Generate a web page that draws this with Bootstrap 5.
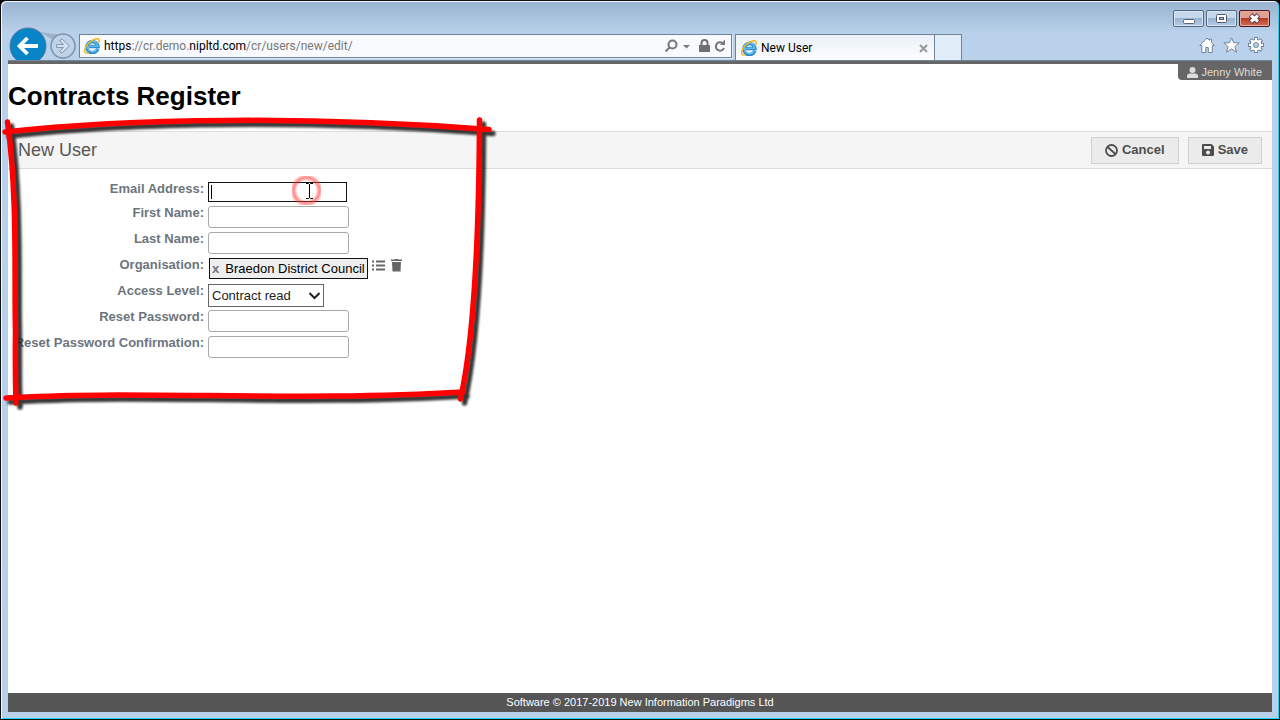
<!DOCTYPE html>
<html lang="en">
<head>
<meta charset="utf-8">
<meta name="viewport" content="width=device-width, initial-scale=1">
<title>New User</title>
<link href="https://cdn.jsdelivr.net/npm/bootstrap@5.3.0/dist/css/bootstrap.min.css" rel="stylesheet">
<style>
body { font-family: "Liberation Sans", Arial, sans-serif; font-size: 13px; line-height: 16px; background: #000; color: #000; }
button, select, input { font: inherit; }
svg { display: block; }
.win { background: linear-gradient(#99b3d1 0, #b9d1ea 32px, #b9d0ea 100%); border: 1px solid #111; border-radius: 6px 6px 0 0; box-shadow: inset 1px 1px #f2f8fd, inset -1px -1px #1cd8f0; padding: 0 7px 7px; }
.titlebar { height: 33px; padding-top: 9px; gap: 2px; padding-right: 2px; }
.winbtn { width: 31px; height: 17px; padding: 0; border: 1px solid #536780; border-radius: 2px; background: linear-gradient(#c5d8ec 0 45%, #98b3d1 50%, #b4cce6); box-shadow: inset 0 0 0 1px #d8e6f4; }
.winbtn.shut { border-color: #4d1420; background: linear-gradient(#e0a094 0 45%, #b93b22 50%, #cf705a); box-shadow: inset 0 0 0 1px #e5aba0; }
.navrow { height: 27px; font-family: Roboto, "Open Sans", sans-serif; font-size: 12px; }
.plain { border: 0; background: none; padding: 0; }
.arrows { width: 71px; }
.arrows svg { margin-top: -9px; }
.address { height: 24px; border: 1px solid #6f8296; background: #f8fafe; flex: 0 0 653px; padding: 0 5px 0 4px; box-shadow: 1px 1px #dfeaf6; }
.url { color: #777; white-space: nowrap; }
.url b { font-weight: 400; color: #000; }
.tabitem { width: 200px; height: 27px; margin-left: 3px; border: 1px solid #6f8296; border-bottom: 0; background: linear-gradient(#eaf0f8, #fdfeff); padding: 0 6px 0 5px; }
.newtab { width: 27px; height: 27px; border: 1px solid #6f8296; border-width: 1px 1px 0 0; background: #e1edf9; }
.tools { gap: 8px; padding-right: 8px; height: 22px; }
.page { background: #fff; border-top: 3px solid #666; min-height: 0; box-shadow: 0 -1px #71879c; }
.account { background: #666; color: #ddd; font-size: 11px; line-height: 16px; padding: 0 10px 0 9px; border-radius: 0 0 0 4px; text-decoration: none; gap: 3px; }
h1 { font-size: 26px; line-height: 32px; font-weight: 700; margin: 0 0 19px; }
.pagebar { height: 38px; background: #f5f5f5; border: solid #ddd; border-width: 1px 0; padding: 0 10px; gap: 9px; }
h2 { font-size: 18px; line-height: 24px; color: #555; margin: 0; }
.act { height: 27px; border: 1px solid #d0d0d0; border-radius: 0; background: #ebebeb; color: #4d4d4d; font-size: 13px; font-weight: 700; line-height: 16px; padding: 0 13px; gap: 4px; }
.fields { display: grid; grid-template-columns: 196px 1fr; column-gap: 4px; grid-template-rows: 24px; grid-auto-rows: 26px; padding-top: 13px; }
.fields label { font-weight: 700; color: #6c757d; text-align: right; white-space: nowrap; margin-top: -1px; }
.txt { width: 141px; height: 22px; border: 1px solid #a9a9a9; border-radius: 3px; padding: 0 3px; display: block; }
.txt.live { width: 139px; height: 20px; border-color: #111; border-radius: 0; outline: 0; }
.lvl { width: 116px; height: 23px; border: 1px solid #666; border-radius: 0; padding: 0 0 0 3px; appearance: none; background: #fff; color: #222; display: block; }
.chip { height: 21px; border: 1px solid #111; background: #eee; padding: 0 2px; gap: 6px; margin-left: 1px; white-space: nowrap; }
.iconset { gap: 6px; }
.pagefoot { background: #555; color: #fff; font-size: 11px; line-height: 19px; }
.over { position: absolute; pointer-events: none; }
</style>
</head>
<body>
<div class="win vh-100 d-flex flex-column position-relative overflow-hidden">
  <header>
    <div class="titlebar d-flex justify-content-end">
      <button class="winbtn" aria-label="Minimize"><svg width="29" height="15"><rect x="9.500" y="8.500" width="11" height="4" rx="1" fill="#fff" stroke="#5d6673"/></svg></button>
      <button class="winbtn" aria-label="Maximize"><svg width="29" height="15"><rect x="9.500" y="3.500" width="10" height="8" rx="1" fill="#fff" stroke="#505b69"/><rect x="12.500" y="6.500" width="4" height="2" fill="#a9c0da" stroke="#505b69"/></svg></button>
      <button class="winbtn shut" aria-label="Close"><svg width="29" height="15"><path d="M10.500 4l8 7M18.500 4l-8 7" stroke="#5a3941" stroke-width="5"/><path d="M11 4.500l7 6M18 4.500l-7 6" stroke="#fff" stroke-width="3"/></svg></button>
    </div>
    <div class="navrow d-flex">
      <div class="arrows flex-shrink-0">
        <svg width="71" height="36" role="img" aria-label="Back and forward">
          <path d="M22 3Q36 10 58 9L50 18Q38 10 22 3z" fill="#9eb2c9"/>
          <circle cx="20" cy="21" r="18" fill="#0785c6" stroke="#557899"/>
          <path d="M30 21H12M19.500 13l-8 8 8 8" fill="none" stroke="#fff" stroke-width="3.800"/>
          <circle cx="55" cy="21" r="12" fill="#bfd2e9" stroke="#7e92aa" stroke-width="1.500"/>
          <path d="M48.500 19.500h7l-4-4 2.500-1.500 7.500 7-7.500 7-2.500-1.500 4-4h-7z" fill="#d2e0f0" stroke="#8398b1"/>
        </svg>
      </div>
      <div class="address d-flex align-items-center">
        <svg width="16" height="16" viewBox="0 0 16 16" class="me-1 flex-shrink-0"><g id="ie"><path d="M13.800 10.800A5.600 5.600 0 1 1 14 8.500H5" fill="none" stroke="#2b8bcd" stroke-width="3.400"/><path d="M13 11A5.300 5.300 0 1 1 13.700 8.300H5" fill="none" stroke="#62bceb" stroke-width="1.600"/><path d="M4.500 14.500C-1.500 17 0 8.500 6 4S16.500-.5 14.800 4.500" fill="none" stroke="#f0b81e" stroke-width="1.500"/></g></svg>
        <a href="#" class="url text-decoration-none me-auto"><b>https</b>://cr.demo.<b>nipltd.com</b>/cr/users/new/edit/</a>
        <button class="plain" aria-label="Search"><svg width="27" height="16"><circle cx="8.500" cy="6.500" r="4" fill="none" stroke="#777" stroke-width="2"/><path d="M5.500 9.500l-4 4" stroke="#777" stroke-width="2"/><path d="M19 7h7l-3.500 3.500z" fill="#777"/></svg></button>
        <svg class="ms-2" width="11" height="14"><path d="M0 6h11v7H0z" fill="#707070"/><path d="M2.500 7V4a3 3 0 0 1 6 0v3" fill="none" stroke="#707070" stroke-width="2"/></svg>
        <button class="plain ms-1" aria-label="Refresh"><svg width="12" height="16"><path d="M10 10a4.200 4.200 0 1 1-1.500-5" fill="none" stroke="#777" stroke-width="2"/><path d="M6 7h5V1.500z" fill="#777"/></svg></button>
      </div>
      <div class="tabitem d-flex align-items-center flex-shrink-0">
        <svg width="16" height="16" viewBox="0 0 16 16" class="me-1"><use href="#ie"/></svg>
        <span class="me-auto">New User</span>
        <button class="plain" aria-label="Close tab"><svg width="9" height="9"><path d="M1 1l7 7M8 1l-7 7" stroke="#999" stroke-width="2"/></svg></button>
      </div>
      <button class="newtab p-0 flex-shrink-0" aria-label="New tab"></button>
      <div class="tools ms-auto d-flex align-items-center">
        <button class="plain" aria-label="Home"><svg width="16" height="16"><path d="M8 1L.8 8.500h2V15.500h4V10.500h2.500v5h4V8.500h2L12.500 5.500V2h-2v1.500z" fill="#fff" stroke="#71859c"/></svg></button>
        <button class="plain" aria-label="Favorites"><svg width="17" height="16"><path d="M8.500.8l2.200 5h5.500l-4.300 3.800 1.600 5.600-5-3.300-5 3.300 1.600-5.600L.8 5.800h5.500z" fill="#fff" stroke="#71859c"/></svg></button>
        <button class="plain" aria-label="Settings"><svg width="16" height="16"><g stroke-linecap="butt"><path d="M8 0v16M0 8h16M2.300 2.300l11.400 11.400M13.700 2.300L2.300 13.700" stroke="#71859c" stroke-width="4"/><circle cx="8" cy="8" r="6.200" fill="#71859c"/><path d="M8 1v14M1 8h14M3 3l10 10M13 3L3 13" stroke="#fff" stroke-width="2.200"/><circle cx="8" cy="8" r="5.300" fill="#fff"/><circle cx="8" cy="8" r="2.500" fill="#b9d1ea" stroke="#71859c"/></g></svg></button>
      </div>
    </div>
  </header>

  <main class="page flex-grow-1 d-flex flex-column">
    <div class="d-flex justify-content-end"><a href="#" class="account d-flex align-items-center"><svg width="11" height="11"><circle cx="5.500" cy="3" r="3" fill="#ddd"/><path d="M0 11V9q0-2.500 3-2.500h5q3 0 3 2.500v2z" fill="#ddd"/></svg>Jenny White</a></div>
    <h1>Contracts Register</h1>
    <div class="pagebar d-flex align-items-center">
      <h2 class="fw-normal me-auto">New User</h2>
      <button class="act d-flex align-items-center"><svg width="13" height="13"><circle cx="6.500" cy="6.500" r="5.500" fill="none" stroke="#4d4d4d" stroke-width="1.800"/><path d="M2.500 3l8 7" stroke="#4d4d4d" stroke-width="1.800"/></svg>Cancel</button>
      <button class="act d-flex align-items-center"><svg width="12" height="12"><path fill-rule="evenodd" d="M1 0h8.500L12 2.500V11q0 1-1 1H1q-1 0-1-1V1q0-1 1-1zM2 2v3h7V2zM6 6.500a2 2 0 1 0 .1 0z" fill="#4d4d4d"/></svg>Save</button>
    </div>
    <form class="fields">
      <label for="email">Email Address:</label><div><input id="email" class="txt live" type="text"></div>
      <label for="first">First Name:</label><div><input id="first" class="txt" type="text"></div>
      <label for="last">Last Name:</label><div><input id="last" class="txt" type="text"></div>
      <label for="org">Organisation:</label>
      <div class="d-flex align-items-start">
        <div class="chip d-flex align-items-center"><button type="button" id="org" class="plain fw-bold text-secondary" aria-label="Remove Braedon District Council">x</button>Braedon District Council</div>
        <div class="iconset d-flex ms-1">
          <button type="button" class="plain" aria-label="List"><svg width="13" height="15"><path d="M0 3.500h2M4 3.500h9M0 7.500h2M4 7.500h9M0 11.500h2M4 11.500h9" stroke="#666" stroke-width="2"/></svg></button>
          <button type="button" class="plain" aria-label="Delete"><svg width="11" height="15"><path d="M0 1.500h4V1h3v.5h4V3H0zM1 4h9l-.5 9.500h-8z" fill="#666"/></svg></button>
        </div>
      </div>
      <label for="level">Access Level:</label>
      <div><div class="position-relative d-inline-block"><select id="level" class="lvl"><option>Contract read</option></select><svg class="over end-0 top-0 me-1 mt-2" width="11" height="8"><path d="M.5 1L5.500 6l5-5" fill="none" stroke="#222" stroke-width="2"/></svg></div></div>
      <label for="pass">Reset Password:</label><div><input id="pass" class="txt" type="password"></div>
      <label for="confirm">Reset Password Confirmation:</label><div><input id="confirm" class="txt" type="password"></div>
    </form>
  </main>
  <footer class="pagefoot text-center">Software © 2017-2019 New Information Paradigms Ltd</footer>

  <svg class="over top-0 start-0" width="500" height="420" viewBox="1 1 500 420" aria-hidden="true">
    <defs>
      <filter id="soft" x="-5%" y="-5%" width="110%" height="110%"><feGaussianBlur stdDeviation="1"/></filter>
      <g id="frame" fill="none" stroke-width="5.500" stroke-linecap="round">
        <path d="M5 132C130 118 310 116 489 129.500"/>
        <path d="M7.500 122C18 200 14 280 15.500 330Q15 370 16 403"/>
        <path d="M6 398C130 390 300 402 463 392"/>
        <path d="M479.500 120C479 230 475 335 460.500 399"/>
      </g>
    </defs>
    <use href="#frame" x="4" y="4" stroke="#222" opacity=".9" filter="url(#soft)"/>
    <use href="#frame" stroke="#f00"/>
    <circle cx="306.500" cy="190.500" r="13" fill="none" stroke="#ff3b3b" stroke-width="4" opacity=".6" filter="url(#soft)"/>
    <path d="M211.500 185v14" stroke="#000"/>
    <path d="M306 183.500h2.500l1 1 1-1h2.500M306 198.500h2.500l1-1 1 1h2.500M309.500 184v14" fill="none" stroke="#000"/>
  </svg>
</div>
<script src="https://cdn.jsdelivr.net/npm/bootstrap@5.3.0/dist/js/bootstrap.bundle.min.js"></script>
</body>
</html>
